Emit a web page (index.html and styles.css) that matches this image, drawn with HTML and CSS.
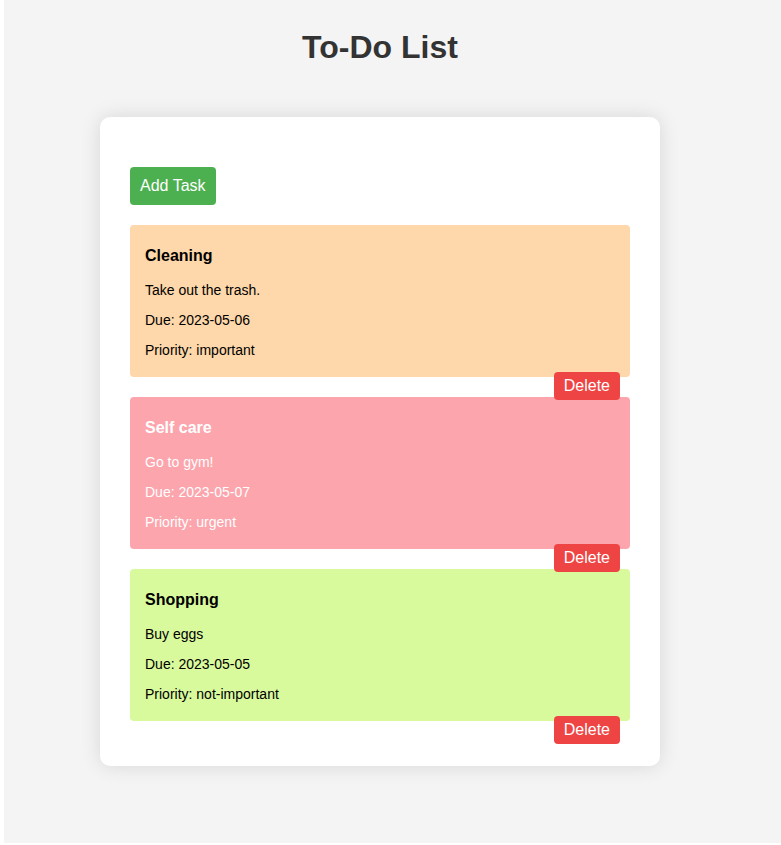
FILE: index.html
```html
<!DOCTYPE html>
<html lang="en">
<head>
<meta charset="utf-8">
<title>To-Do List</title>
<link rel="stylesheet" href="styles.css">
</head>
<body>
<div class="page">
  <main class="column">
    <h1 class="title">To-Do List</h1>
    <section class="panel">
      <button class="add-btn">Add Task</button>
      <ul class="tasks">
        <li class="task task-important">
          <h3 class="task-title">Cleaning</h3>
          <p class="task-line">Take out the trash.</p>
          <p class="task-line">Due: 2023-05-06</p>
          <p class="task-line">Priority: important</p>
          <button class="delete-btn">Delete</button>
        </li>
        <li class="task task-urgent">
          <h3 class="task-title">Self care</h3>
          <p class="task-line">Go to gym!</p>
          <p class="task-line">Due: 2023-05-07</p>
          <p class="task-line">Priority: urgent</p>
          <button class="delete-btn">Delete</button>
        </li>
        <li class="task task-not-important">
          <h3 class="task-title">Shopping</h3>
          <p class="task-line">Buy eggs</p>
          <p class="task-line">Due: 2023-05-05</p>
          <p class="task-line">Priority: not-important</p>
          <button class="delete-btn">Delete</button>
        </li>
      </ul>
    </section>
  </main>
</div>
</body>
</html>
```
FILE: styles.css
```css
html {
  background: #ffffff;
}

body {
  margin: 0;
  font-family: "Liberation Sans", Arial, sans-serif;
}

.page {
  margin-left: 4px;
  height: 843px;
  background: #f4f4f4;
  overflow: hidden;
}

.column {
  width: 560px;
  margin-left: 96px;
}

.title {
  margin: 0 0 51px;
  padding-top: 29px;
  font-size: 32px;
  line-height: 37px;
  font-weight: bold;
  color: #333333;
  text-align: center;
}

.panel {
  background: #ffffff;
  border-radius: 10px;
  box-shadow: 0 0 20px rgba(0, 0, 0, 0.12);
  padding: 50px 30px 45px;
}

.add-btn {
  display: block;
  margin: 0 0 20px;
  padding: 10px;
  border: none;
  border-radius: 4px;
  background: #4caf50;
  color: #ffffff;
  font-family: "Liberation Sans", Arial, sans-serif;
  font-size: 16px;
  line-height: 18px;
  cursor: pointer;
}

.tasks {
  list-style: none;
  margin: 0;
  padding: 0;
  display: flex;
  flex-direction: column;
  gap: 20px;
}

.task {
  position: relative;
  padding: 22px 15px 19px;
  border-radius: 4px;
  color: #000000;
}

.task-important {
  background: #fed7aa;
}

.task-urgent {
  background: #fca5ad;
  color: #ffffff;
}

.task-not-important {
  background: #d9f99d;
}

.task-title {
  margin: 0 0 17px;
  font-size: 16px;
  line-height: 18px;
  font-weight: bold;
}

.task-line {
  margin: 0 0 14px;
  font-size: 14px;
  line-height: 16px;
}

.task-line:last-of-type {
  margin-bottom: 0;
}

.delete-btn {
  position: absolute;
  right: 10px;
  bottom: -23px;
  z-index: 2;
  padding: 5px 10px;
  border: none;
  border-radius: 4px;
  background: #ef4444;
  color: #ffffff;
  font-family: "Liberation Sans", Arial, sans-serif;
  font-size: 16px;
  line-height: 18px;
  cursor: pointer;
}
```
